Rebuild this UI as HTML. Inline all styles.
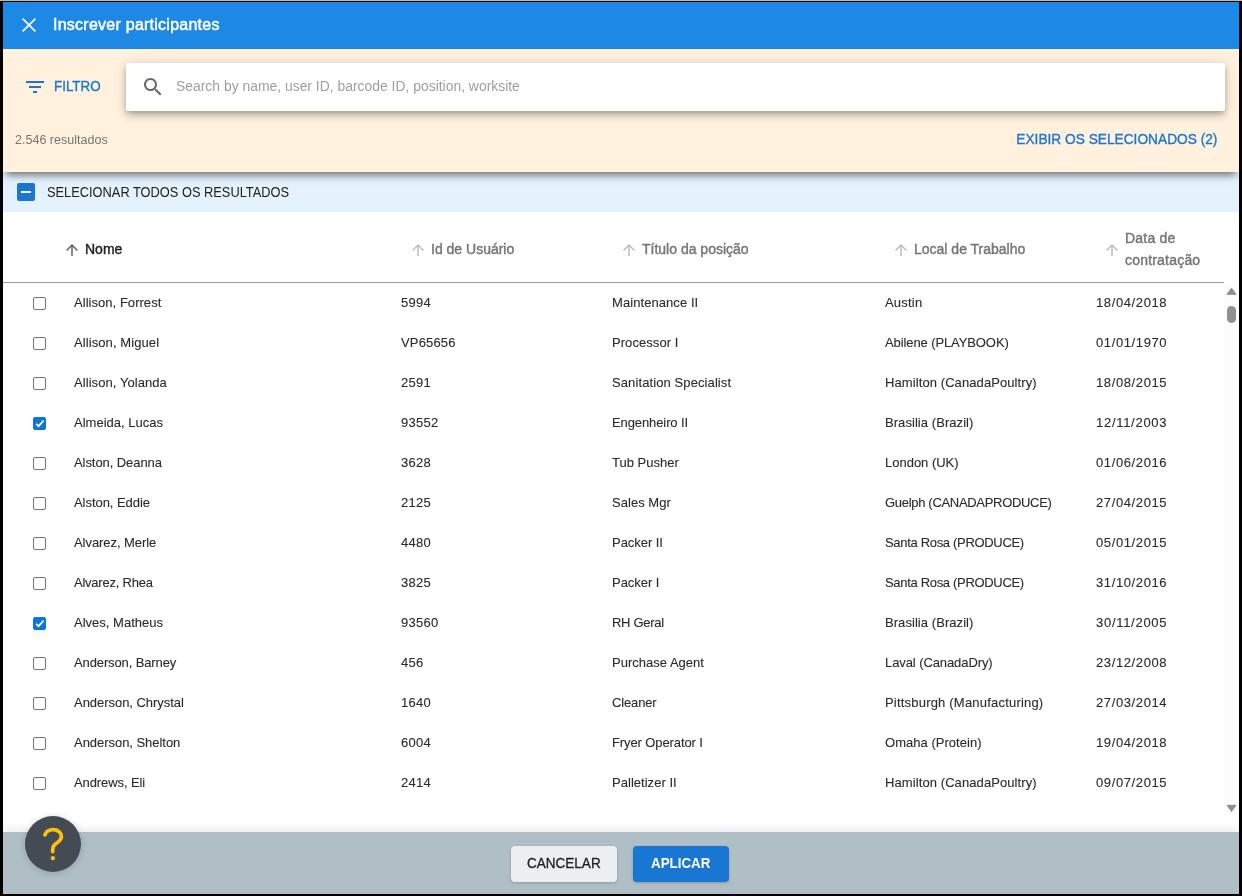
<!DOCTYPE html>
<html><head><meta charset="utf-8">
<style>
*{box-sizing:border-box;margin:0;padding:0}
html,body{width:1242px;height:896px;overflow:hidden;background:#000;font-family:"Liberation Sans",sans-serif}
#frame{position:absolute;left:0;top:0;width:1242px;height:896px;background:#000}
#topline{position:absolute;left:0;top:0;width:1242px;height:1px;background:#b9b9b5}
#app{position:absolute;left:3px;top:2px;width:1236px;height:892px;background:#fff;overflow:hidden;will-change:transform}
.abs{position:absolute}
#hdr{left:0;top:0;width:1236px;height:47px;background:#1e88e5}
#hdr .title{left:50px;top:14px;font-size:16px;color:#fff;white-space:nowrap;letter-spacing:0.25px;-webkit-text-stroke:0.5px #fff}
#filt{left:0;top:47px;width:1236px;height:123px;background:#fff1de;box-shadow:0 6px 8px -3px rgba(0,0,0,.55);z-index:2}
#search{left:123px;top:14px;width:1099px;height:48px;background:#fff;border-radius:2px;box-shadow:0 3px 5px -1px rgba(0,0,0,.2),0 5px 8px 0 rgba(0,0,0,.14),0 1px 14px 0 rgba(0,0,0,.12)}
.ph{left:50px;top:15px;font-size:14px;color:#9e9e9e;white-space:nowrap;transform:scaleX(0.993);transform-origin:0 0}
.filtro{left:51px;top:29px;font-size:14px;color:#1976d2;white-space:nowrap;transform:scaleX(0.956);transform-origin:0 0;-webkit-text-stroke:0.35px #1976d2}
.res{left:12px;top:83px;font-size:13px;color:#757575;white-space:nowrap;transform:scaleX(0.964);transform-origin:0 0}
.exib{right:22px;top:82px;font-size:14px;color:#1976d2;white-space:nowrap;transform:scaleX(0.979);transform-origin:100% 0;-webkit-text-stroke:0.35px #1976d2}
#selall{left:0;top:170px;width:1236px;height:40px;background:#e3f2fd;z-index:1}
#selall .cb{left:14px;top:11px;width:18px;height:18px;background:#1976d2;border-radius:2px}
#selall .cb i{position:absolute;left:4px;top:8px;width:10px;height:2px;background:#fff}
#selall .t{left:44px;top:12px;font-size:14px;color:#212121;white-space:nowrap;transform:scaleX(0.916);transform-origin:0 0}
.th{font-size:14px;color:#757575;white-space:nowrap;-webkit-text-stroke:0.4px currentColor}
.hline{left:0;top:280px;width:1221px;height:1px;background:#999}
.row{position:absolute;left:0;width:1221px;height:40px;font-size:13px;color:#2b2b2b;-webkit-text-stroke:0.1px #2b2b2b}
.row span{position:absolute;top:12px;white-space:nowrap}
.cbx{position:absolute;left:30px;top:14px;width:13px;height:13px;border:1px solid #767676;border-radius:2px;background:#fff}
.cbx.on{background:#0b76d8;border-color:#0b76d8}
#sb{left:1221px;top:281px;width:15px;height:533px;background:#fcfcfc}
#foot{left:0;top:830px;width:1236px;height:62px;background:#b0bec5;box-shadow:0 -2px 10px rgba(0,0,0,.09)}
.btn{position:absolute;top:14px;height:36px;border-radius:4px;font-size:14px;white-space:nowrap;box-shadow:0 1px 3px rgba(0,0,0,.2)}
#help{left:22px;top:814px;width:56px;height:56px;border-radius:50%;background:#444b54;box-shadow:0 1px 7px rgba(0,0,0,.18);z-index:5}
</style></head><body>
<div id="frame"></div>
<div id="topline"></div>
<div id="app">
  <div id="hdr" class="abs">
    <svg class="abs" style="left:14px;top:11px" width="24" height="24" viewBox="0 0 24 24"><path d="M5.6 5.6L18.4 18.4M18.4 5.6L5.6 18.4" stroke="#f5f5f5" stroke-width="1.8"/></svg>
    <div class="abs title">Inscrever participantes</div>
  </div>
  <div id="filt" class="abs">
    <svg class="abs" style="left:20px;top:26px" width="24" height="24" viewBox="0 0 24 24"><path d="M10 18h4v-2h-4v2zM3 6v2h18V6H3zm3 7h12v-2H6v2z" fill="#1976d2"/></svg>
    <div class="abs filtro">FILTRO</div>
    <div id="search" class="abs">
      <svg class="abs" style="left:15px;top:12px" width="24" height="24" viewBox="0 0 24 24"><path d="M15.5 14h-.79l-.28-.27C15.41 12.59 16 11.11 16 9.5 16 5.91 13.09 3 9.5 3S3 5.91 3 9.5 5.91 16 9.5 16c1.61 0 3.09-.59 4.23-1.57l.27.28v.79l5 4.99L20.49 19l-4.99-5zm-6 0C7.01 14 5 11.99 5 9.5S7.01 5 9.5 5 14 7.01 14 9.5 11.99 14 9.5 14z" fill="#6a6a6a"/></svg>
      <div class="abs ph">Search by name, user ID, barcode ID, position, worksite</div>
    </div>
    <div class="abs res">2.546 resultados</div>
    <div class="abs exib">EXIBIR OS SELECIONADOS (2)</div>
  </div>
  <div id="selall" class="abs">
    <div class="abs cb"><i></i></div>
    <div class="abs t">SELECIONAR TODOS OS RESULTADOS</div>
  </div>
  <!-- table header -->
  <div id="thead"><svg class="abs" style="left:60px;top:239px" width="18" height="18" viewBox="0 0 24 24"><path d="M4 12l1.41 1.41L11 7.83V20h2V7.83l5.58 5.59L20 12l-8-8-8 8z" fill="#616161"/></svg><div class="abs th" style="left:82px;top:239px;color:#212121">Nome</div><svg class="abs" style="left:406px;top:239px" width="18" height="18" viewBox="0 0 24 24"><path d="M4 12l1.41 1.41L11 7.83V20h2V7.83l5.58 5.59L20 12l-8-8-8 8z" fill="#bdbdbd"/></svg><div class="abs th" style="left:428px;top:239px">Id de Usuário</div><svg class="abs" style="left:617px;top:239px" width="18" height="18" viewBox="0 0 24 24"><path d="M4 12l1.41 1.41L11 7.83V20h2V7.83l5.58 5.59L20 12l-8-8-8 8z" fill="#bdbdbd"/></svg><div class="abs th" style="left:639px;top:239px">Título da posição</div><svg class="abs" style="left:889px;top:239px" width="18" height="18" viewBox="0 0 24 24"><path d="M4 12l1.41 1.41L11 7.83V20h2V7.83l5.58 5.59L20 12l-8-8-8 8z" fill="#bdbdbd"/></svg><div class="abs th" style="left:911px;top:239px">Local de Trabalho</div><svg class="abs" style="left:1100px;top:239px" width="18" height="18" viewBox="0 0 24 24"><path d="M4 12l1.41 1.41L11 7.83V20h2V7.83l5.58 5.59L20 12l-8-8-8 8z" fill="#bdbdbd"/></svg><div class="abs th" style="left:1122px;top:225px;line-height:22px;letter-spacing:0.2px">Data de<br>contratação</div></div>
  <div class="abs hline"></div>
  <!--ROWS--><div class="row" style="top:281px"><div class="cbx"></div><span style="left:71px;letter-spacing:0.04px">Allison, Forrest</span><span style="left:398px;letter-spacing:0.29px">5994</span><span style="left:609px;letter-spacing:0.07px">Maintenance II</span><span style="left:882px;letter-spacing:0.20px">Austin</span><span style="left:1093px;letter-spacing:0.61px">18/04/2018</span></div>
<div class="row" style="top:321px"><div class="cbx"></div><span style="left:71px;letter-spacing:0.09px">Allison, Miguel</span><span style="left:398px;letter-spacing:0.15px">VP65656</span><span style="left:609px;letter-spacing:0.06px">Processor I</span><span style="left:882px;letter-spacing:-0.10px">Abilene (PLAYBOOK)</span><span style="left:1093px;letter-spacing:0.61px">01/01/1970</span></div>
<div class="row" style="top:361px"><div class="cbx"></div><span style="left:71px;letter-spacing:0.07px">Allison, Yolanda</span><span style="left:398px;letter-spacing:0.29px">2591</span><span style="left:609px;letter-spacing:0.10px">Sanitation Specialist</span><span style="left:882px;letter-spacing:0.09px">Hamilton (CanadaPoultry)</span><span style="left:1093px;letter-spacing:0.61px">18/08/2015</span></div>
<div class="row" style="top:401px"><div class="cbx on"><svg width="13" height="13" viewBox="0 0 13 13" style="position:absolute;left:-1px;top:-1px"><path d="M3.2 6.8L5.6 9.2L10.6 3.5" stroke="#fff" stroke-width="1.8" fill="none"/></svg></div><span style="left:71px;letter-spacing:0.01px">Almeida, Lucas</span><span style="left:398px;letter-spacing:0.29px">93552</span><span style="left:609px;letter-spacing:-0.10px">Engenheiro II</span><span style="left:882px;letter-spacing:0.06px">Brasilia (Brazil)</span><span style="left:1093px;letter-spacing:0.71px">12/11/2003</span></div>
<div class="row" style="top:441px"><div class="cbx"></div><span style="left:71px;letter-spacing:-0.07px">Alston, Deanna</span><span style="left:398px;letter-spacing:0.29px">3628</span><span style="left:609px;letter-spacing:0.01px">Tub Pusher</span><span style="left:882px;letter-spacing:-0.01px">London (UK)</span><span style="left:1093px;letter-spacing:0.61px">01/06/2016</span></div>
<div class="row" style="top:481px"><div class="cbx"></div><span style="left:71px;letter-spacing:-0.05px">Alston, Eddie</span><span style="left:398px;letter-spacing:0.29px">2125</span><span style="left:609px;letter-spacing:0.03px">Sales Mgr</span><span style="left:882px;letter-spacing:-0.31px">Guelph (CANADAPRODUCE)</span><span style="left:1093px;letter-spacing:0.61px">27/04/2015</span></div>
<div class="row" style="top:521px"><div class="cbx"></div><span style="left:71px;letter-spacing:-0.06px">Alvarez, Merle</span><span style="left:398px;letter-spacing:0.29px">4480</span><span style="left:609px;letter-spacing:-0.04px">Packer II</span><span style="left:882px;letter-spacing:-0.32px">Santa Rosa (PRODUCE)</span><span style="left:1093px;letter-spacing:0.61px">05/01/2015</span></div>
<div class="row" style="top:561px"><div class="cbx"></div><span style="left:71px;letter-spacing:-0.23px">Alvarez, Rhea</span><span style="left:398px;letter-spacing:0.29px">3825</span><span style="left:609px;letter-spacing:-0.04px">Packer I</span><span style="left:882px;letter-spacing:-0.32px">Santa Rosa (PRODUCE)</span><span style="left:1093px;letter-spacing:0.61px">31/10/2016</span></div>
<div class="row" style="top:601px"><div class="cbx on"><svg width="13" height="13" viewBox="0 0 13 13" style="position:absolute;left:-1px;top:-1px"><path d="M3.2 6.8L5.6 9.2L10.6 3.5" stroke="#fff" stroke-width="1.8" fill="none"/></svg></div><span style="left:71px;letter-spacing:0.01px">Alves, Matheus</span><span style="left:398px;letter-spacing:0.29px">93560</span><span style="left:609px;letter-spacing:-0.29px">RH Geral</span><span style="left:882px;letter-spacing:0.06px">Brasilia (Brazil)</span><span style="left:1093px;letter-spacing:0.71px">30/11/2005</span></div>
<div class="row" style="top:641px"><div class="cbx"></div><span style="left:71px;letter-spacing:-0.12px">Anderson, Barney</span><span style="left:398px;letter-spacing:0.29px">456</span><span style="left:609px;letter-spacing:0.01px">Purchase Agent</span><span style="left:882px;letter-spacing:-0.09px">Laval (CanadaDry)</span><span style="left:1093px;letter-spacing:0.61px">23/12/2008</span></div>
<div class="row" style="top:681px"><div class="cbx"></div><span style="left:71px;letter-spacing:-0.04px">Anderson, Chrystal</span><span style="left:398px;letter-spacing:0.29px">1640</span><span style="left:609px;letter-spacing:-0.15px">Cleaner</span><span style="left:882px;letter-spacing:0.20px">Pittsburgh (Manufacturing)</span><span style="left:1093px;letter-spacing:0.61px">27/03/2014</span></div>
<div class="row" style="top:721px"><div class="cbx"></div><span style="left:71px;letter-spacing:-0.04px">Anderson, Shelton</span><span style="left:398px;letter-spacing:0.29px">6004</span><span style="left:609px;letter-spacing:-0.10px">Fryer Operator I</span><span style="left:882px;letter-spacing:0.03px">Omaha (Protein)</span><span style="left:1093px;letter-spacing:0.61px">19/04/2018</span></div>
<div class="row" style="top:761px"><div class="cbx"></div><span style="left:71px;letter-spacing:-0.09px">Andrews, Eli</span><span style="left:398px;letter-spacing:0.29px">2414</span><span style="left:609px;letter-spacing:0.03px">Palletizer II</span><span style="left:882px;letter-spacing:0.09px">Hamilton (CanadaPoultry)</span><span style="left:1093px;letter-spacing:0.61px">09/07/2015</span></div><!--/ROWS-->
  <div id="sb" class="abs">
    <svg class="abs" style="left:0;top:0" width="14" height="533" viewBox="0 0 14 533">
      <path d="M7.5 5.2 L12 11.3 L3 11.3 Z" fill="#909090" stroke="#909090" stroke-width="1" stroke-linejoin="round"/>
      <rect x="3" y="23" width="9" height="17" rx="4.5" fill="#909090"/>
      <path d="M3 522.3 L12 522.3 L7.5 528.5 Z" fill="#909090" stroke="#909090" stroke-width="1" stroke-linejoin="round"/>
    </svg>
  </div>
  <div id="foot" class="abs">
    <div class="btn" style="left:508px;width:106px;background:#eceff1;color:#212121"><span class="abs" style="left:16px;top:9px;transform:scaleX(0.966);transform-origin:0 0;-webkit-text-stroke:0.3px #212121">CANCELAR</span></div>
    <div class="btn" style="left:630px;width:96px;background:#1976d2;color:#fff;font-weight:bold"><span class="abs" style="left:18px;top:9px;transform:scaleX(0.955);transform-origin:0 0">APLICAR</span></div>
  </div>
  <div id="help" class="abs"><svg width="56" height="56" viewBox="0 0 56 56" style="position:absolute;left:0;top:0"><path d="M19.9 18.9 C21 15.5 24.3 13.6 28.4 13.6 C32.8 13.6 36.4 16.5 36.4 20.5 C36.4 24 33.6 25.8 31 27.5 C28.6 29.1 27.7 30.6 27.7 33.5 L27.7 35.6" stroke="#fbc10b" stroke-width="3.7" fill="none" stroke-linecap="round"/><circle cx="27.9" cy="42.1" r="2.2" fill="#fbc10b"/></svg></div>
</div>
</body></html>
